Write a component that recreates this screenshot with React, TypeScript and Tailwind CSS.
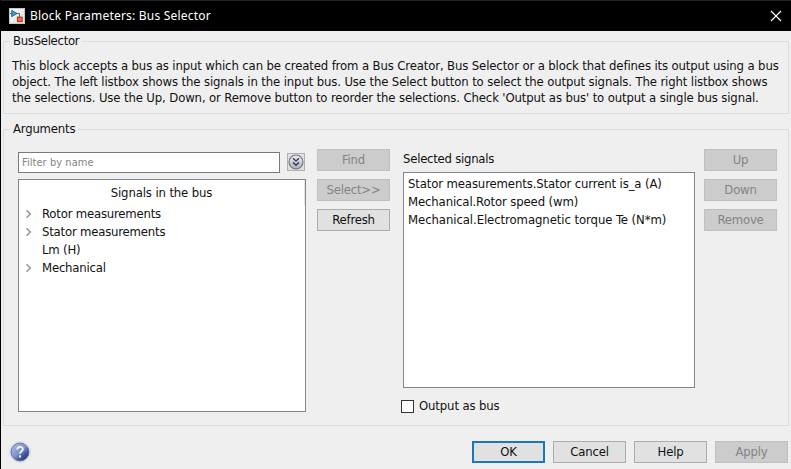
import type { ReactNode } from 'react';

type ButtonProps = { children: ReactNode; disabled?: boolean; primary?: boolean; className?: string };

function Button({ children, disabled, primary, className = '' }: ButtonProps) {
  const tone = disabled
    ? 'border border-[#bfbfbf] bg-[#cccccc] text-[#848484]'
    : primary
      ? 'border-2 border-[#1878bd] bg-[#e1e1e1]'
      : 'border border-[#adadad] bg-[#e1e1e1]';
  return (
    <button
      disabled={disabled}
      className={`flex h-[22px] w-[73px] shrink-0 items-center justify-center whitespace-nowrap leading-4 tracking-[-0.2px] ${tone} ${className}`}
    >
      {children}
    </button>
  );
}

function TreeRow({ label, expandable }: { label: string; expandable?: boolean }) {
  return (
    <li className="flex h-[18px] items-center">
      <span className="flex w-[23px] shrink-0 pl-1.5">
        {expandable && (
          <svg width="8" height="10" viewBox="0 0 8 10" fill="none" stroke="#9b9b9b" strokeWidth="1.6">
            <path d="M1.5 1.2 5.3 5 1.5 8.8" />
          </svg>
        )}
      </span>
      <span className="whitespace-nowrap tracking-[-0.2px]">{label}</span>
    </li>
  );
}

function BlockIcon() {
  return (
    <svg width="16" height="16" viewBox="0 0 16 16" className="shrink-0">
      <defs>
        <linearGradient id="paper" x1="0" y1="0" x2="1" y2="1">
          <stop offset="0" stopColor="#ffffff" />
          <stop offset="1" stopColor="#d7dade" />
        </linearGradient>
      </defs>
      <rect x="0.5" y="0.5" width="15" height="15" fill="url(#paper)" stroke="#c4c6ca" />
      <path d="M1 5.5h2M7 5.5h3.5V9" fill="none" stroke="#5c6671" />
      <path d="M2.7 2.3 8 5.5 2.7 8.7Z" fill="#3e9bd3" stroke="#20618f" strokeWidth="0.9" />
      <rect x="8.5" y="9.2" width="4.6" height="4.3" fill="#ee744f" stroke="#b83b20" strokeWidth="1.2" />
    </svg>
  );
}

function ExpandIcon() {
  return (
    <svg width="16" height="16" viewBox="0 0 16 16" className="shrink-0">
      <defs>
        <linearGradient id="knob" x1="0" y1="0" x2="0" y2="1">
          <stop offset="0" stopColor="#f2f2f4" />
          <stop offset="1" stopColor="#aeb0b6" />
        </linearGradient>
      </defs>
      <circle cx="8" cy="8" r="7" fill="url(#knob)" stroke="#707278" strokeWidth="1.1" />
      <path d="M5 4.2 8 7 11 4.2M5 8.4 8 11.2 11 8.4" fill="none" stroke="#33435c" strokeWidth="1.5" />
    </svg>
  );
}

function HelpIcon() {
  return (
    <svg width="22" height="22" viewBox="0 0 22 22" className="shrink-0">
      <defs>
        <linearGradient id="orb" x1="0.1" y1="0.1" x2="0.85" y2="0.9">
          <stop offset="0" stopColor="#a9b9e2" />
          <stop offset="0.5" stopColor="#8094cc" />
          <stop offset="0.75" stopColor="#445b9f" />
          <stop offset="1" stopColor="#26396f" />
        </linearGradient>
      </defs>
      <circle cx="11" cy="11" r="10.4" fill="#f5f6f8" stroke="#c9ccd2" strokeWidth="0.7" />
      <circle cx="11" cy="11" r="9" fill="url(#orb)" stroke="#5b6a9b" strokeWidth="0.9" />
      <path d="M8.2 8.4C8.2 5 13.8 5 13.8 8.2c0 2.2-2.8 2.2-2.8 4.6" fill="none" stroke="#f4f6fc" strokeWidth="1.8" />
      <rect x="10" y="14.4" width="2" height="2.1" fill="#f4f6fc" />
    </svg>
  );
}

export default function App() {
  return (
    <div className="flex h-[469px] w-[791px] flex-col overflow-hidden border-l border-black bg-[#efefef] font-['DejaVu_Sans_Condensed','DejaVu_Sans',sans-serif] text-[13px] leading-4 tracking-[-0.13px] text-[#111111]">
      <header className="flex h-[31px] shrink-0 items-center border-t border-[#222] bg-black pl-2 pr-[9px] text-white">
        <BlockIcon />
        <h1 className="ml-[5px] flex-1 whitespace-nowrap font-['Noto_Sans',sans-serif] text-[12px] tracking-[0.21px]">Block Parameters: Bus Selector</h1>
        <svg width="12" height="12" viewBox="0 0 12 12" stroke="#fff" strokeWidth="1.2">
          <path d="m1 1 10 10M11 1 1 11" />
        </svg>
      </header>

      <fieldset className="ml-0.5 mt-px h-[82px] w-[786px] shrink-0 border border-[#dcdcdc]">
        <legend className="ml-1.5 h-[19px] px-[3px] leading-[18px] tracking-[-0.3px]">BusSelector</legend>
        <p className="pl-2 pt-[7px]">
          <span className="block whitespace-nowrap">This block accepts a bus as input which can be created from a Bus Creator, Bus Selector or a block that defines its output using a bus</span>
          <span className="block whitespace-nowrap">object. The left listbox shows the signals in the input bus. Use the Select button to select the output signals. The right listbox shows</span>
          <span className="block whitespace-nowrap">the selections. Use the Up, Down, or Remove button to reorder the selections. Check 'Output as bus' to output a single bus signal.</span>
        </p>
      </fieldset>

      <fieldset className="ml-0.5 mt-1.5 h-[306px] w-[786px] shrink-0 border border-[#dcdcdc]">
        <legend className="ml-1.5 h-[19px] px-[3px] leading-[18px] tracking-[-0.2px]">Arguments</legend>
        <div className="flex pl-3.5 pt-2.5">
          <div className="mt-[3px] w-[288px] shrink-0">
            <div className="flex items-start gap-[7px]">
              <input
                placeholder="Filter by name"
                className="h-[21px] w-[262px] border border-[#7a7a7a] bg-white px-[3px] text-[11px] tracking-[0.05px] outline-none placeholder:text-[#858585]"
              />
              <button className="mt-px flex size-[18px] items-center justify-center border border-[#b0b0b0] bg-[#e1e1e1]">
                <ExpandIcon />
              </button>
            </div>
            <div className="mt-1.5 h-[233px] border border-[#828790] bg-white">
              <div className="flex h-[25px] items-center justify-center border-r border-[#e5e5e5]">Signals in the bus</div>
              <ul>
                <TreeRow label="Rotor measurements" expandable />
                <TreeRow label="Stator measurements" expandable />
                <TreeRow label="Lm (H)" />
                <TreeRow label="Mechanical" expandable />
              </ul>
            </div>
          </div>

          <div className="ml-[11px] flex flex-col gap-2">
            <Button disabled>Find</Button>
            <Button disabled>Select&gt;&gt;</Button>
            <Button>Refresh</Button>
          </div>

          <div className="ml-[13px] w-[292px] shrink-0">
            <div className="h-[23px] pt-0.5 tracking-[-0.25px]">Selected signals</div>
            <ul className="h-[216px] border border-[#828790] bg-white pl-1 pt-0.5 leading-[18px]">
              <li className="whitespace-nowrap">Stator measurements.Stator current is_a (A)</li>
              <li className="whitespace-nowrap">Mechanical.Rotor speed (wm)</li>
              <li className="whitespace-nowrap tracking-[-0.08px]">Mechanical.Electromagnetic torque Te (N*m)</li>
            </ul>
            <label className="-ml-0.5 mt-2.5 flex items-center gap-[5px]">
              <span className="size-[13px] border border-[#333] bg-white" />
              Output as bus
            </label>
          </div>

          <div className="ml-[9px] flex flex-col gap-2">
            <Button disabled>Up</Button>
            <Button disabled>Down</Button>
            <Button disabled>Remove</Button>
          </div>
        </div>
      </fieldset>

      <footer className="mt-[15px] flex h-[22px] shrink-0 items-center gap-2 pl-2 pr-[3px]">
        <HelpIcon />
        <div className="flex-1" />
        <Button primary>OK</Button>
        <Button>Cancel</Button>
        <Button>Help</Button>
        <Button disabled>Apply</Button>
      </footer>
    </div>
  );
}
